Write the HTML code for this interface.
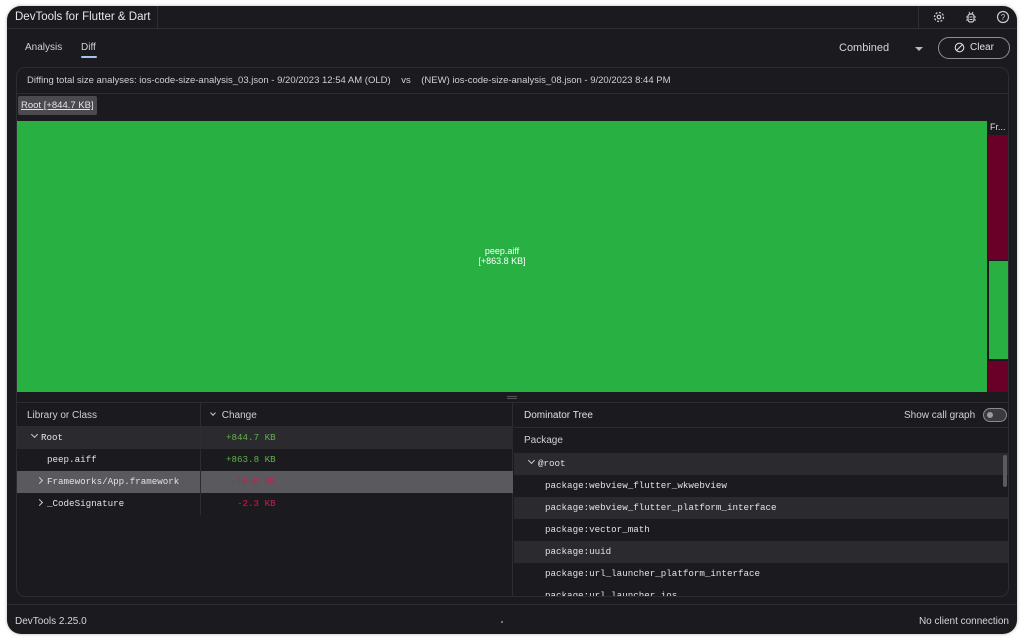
<!DOCTYPE html>
<html><head><style>
*{box-sizing:border-box;margin:0;padding:0}
body{width:1024px;height:640px;background:#fff;font-family:"Liberation Sans",sans-serif;color:#e3e3e6;overflow:hidden;position:relative}
.win{position:absolute;left:7px;top:6px;width:1010px;height:628px;background:#1b1b1f;border-radius:14px;overflow:hidden;box-shadow:0 0 3px rgba(0,0,0,.3)}
.a{position:absolute}
.mono{font-family:"Liberation Mono",monospace;font-size:9.2px}
.row{position:absolute;height:22px;line-height:22px}
.chev{display:inline-block;width:5px;height:5px;border-right:1.2px solid #ccc;border-bottom:1.2px solid #ccc;transform:rotate(45deg);margin:0 4px 3px 1px}
.chr{display:inline-block;width:5px;height:5px;border-right:1.2px solid #ccc;border-bottom:1.2px solid #ccc;transform:rotate(-45deg);margin:0 5px 1px 0}
</style></head><body>
<div class="win">
 <div class="a" style="left:0;top:0;width:1010px;height:23px;border-bottom:1px solid #2e2e33"></div>
 <div class="a" style="left:150px;top:0;width:1px;height:23px;background:#2e2e33"></div>
 <div class="a" style="left:911px;top:0;width:1px;height:23px;background:#2e2e33"></div>
 <div class="a" style="left:8px;top:5px;font-size:11.5px;color:#e6e6ea">DevTools for Flutter &amp; Dart</div>
 <svg class="a" style="left:925px;top:4px" width="14" height="14" viewBox="0 0 14 14"><circle cx="7" cy="7" r="4.5" fill="none" stroke="#ccc" stroke-width="1.3" stroke-dasharray="2 1.5"/><circle cx="7" cy="7" r="1.8" fill="none" stroke="#ccc" stroke-width="1.2"/></svg>
 <svg class="a" style="left:958px;top:4px" width="12" height="14" viewBox="0 0 12 14"><rect x="3" y="4" width="6" height="8" rx="2.5" fill="none" stroke="#ccc" stroke-width="1.3"/><path d="M1 7h2M9 7h2M1 10h2M9 10h2M4 2l1 2M8 2l-1 2M4.5 7h3M4.5 9.5h3" stroke="#ccc" stroke-width="1"/></svg>
 <svg class="a" style="left:989px;top:4px" width="14" height="14" viewBox="0 0 14 14"><circle cx="7" cy="7" r="5.5" fill="none" stroke="#ccc" stroke-width="1.2"/><text x="7" y="10" font-size="8" fill="#ccc" text-anchor="middle" font-family="Liberation Sans">?</text></svg>

 <div class="a" style="left:18px;top:36px;font-size:10px;color:#d0d0d4">Analysis</div>
 <div class="a" style="left:74px;top:36px;font-size:10px;color:#d0d0d4">Diff</div>
 <div class="a" style="left:74px;top:50px;width:16px;height:2px;background:#a7c1f0;border-radius:1px"></div>
 <div class="a" style="left:832px;top:36px;font-size:11px;color:#d6d6da">Combined</div>
 <div class="a" style="left:908px;top:41px;width:0;height:0;border-left:4px solid transparent;border-right:4px solid transparent;border-top:4px solid #bbb"></div>
 <div class="a" style="left:931px;top:31px;width:72px;height:22px;border:1px solid #8e8e94;border-radius:11px"></div>
 <svg class="a" style="left:947px;top:36px" width="11" height="11" viewBox="0 0 11 11"><circle cx="5.5" cy="5.5" r="4.3" fill="none" stroke="#ddd" stroke-width="1.1"/><path d="M2.5 8.5l6-6" stroke="#ddd" stroke-width="1.1"/></svg>
 <div class="a" style="left:963px;top:36px;font-size:10px;color:#e0e0e4">Clear</div>

 <div class="a" style="left:9px;top:61px;width:993px;height:530px;border:1px solid #2c2c31;border-radius:9px;overflow:hidden">
  <div class="a" style="left:0;top:0;width:993px;height:26px;border-bottom:1px solid #2c2c31"></div>
  <div class="a" style="left:10px;top:7px;font-size:9.5px;color:#d0d0d4;white-space:pre">Diffing total size analyses: ios-code-size-analysis_03.json - 9/20/2023 12:54 AM (OLD)    vs    (NEW) ios-code-size-analysis_08.json - 9/20/2023 8:44 PM</div>
  <div class="a" style="left:1px;top:28px;width:79px;height:19px;background:#4a4a4f;border-radius:2px"></div>
  <div class="a" style="left:4px;top:32px;font-size:9.5px;color:#e6e6e6;text-decoration:underline">Root [+844.7 KB]</div>
  <div class="a" style="left:0;top:53px;width:970px;height:271px;background:#28b043"></div>
  <div class="a" style="left:0;top:178px;width:970px;text-align:center;font-size:9px;color:#fff;line-height:10px">peep.aiff<br>[+863.8 KB]</div>
  <div class="a" style="left:971px;top:53px;width:21px;height:14px;background:#1b1b1f;font-size:9px;color:#ddd;padding-left:2px;line-height:13px">Fr...</div>
  <div class="a" style="left:971px;top:67px;width:21px;height:125px;background:#6a0028"></div>
  <div class="a" style="left:971px;top:192px;width:21px;height:100px;background:#28b043;border:1px solid #1b1b1f"></div>
  <div class="a" style="left:971px;top:293px;width:21px;height:31px;background:#6a0028"></div>
  <div class="a" style="left:490px;top:328px;width:10px;height:1px;background:#555"></div><div class="a" style="left:490px;top:330px;width:10px;height:1px;background:#555"></div>
  <div class="a" style="left:0;top:334px;width:993px;height:1px;background:#2c2c31"></div>

  <div class="a" style="left:0;top:335px;width:496px;height:196px;border-right:1px solid #2c2c31">
   <div class="row" style="left:0;top:0;width:496px;height:24px;line-height:24px;border-bottom:1px solid #2c2c31"></div>
   <div class="a" style="left:10px;top:7px;font-size:10px;color:#cfcfd3">Library or Class</div>
   <div class="a" style="left:193px;top:7px;font-size:10px;color:#cfcfd3"><span class="chev" style="width:4px;height:4px"></span> Change</div>
   <div class="row" style="left:0;top:24px;width:496px;background:#2b2b2f"></div>
   <div class="row" style="left:0;top:68px;width:496px;background:#59595e"></div>
   <div class="a" style="left:183px;top:0;width:1px;height:112px;background:#2c2c31"></div>
   <div class="row mono" style="left:14px;top:24px"><span class="chev"></span>Root</div>
   <div class="row mono" style="left:30px;top:46px">peep.aiff</div>
   <div class="row mono" style="left:20px;top:68px"><span class="chr"></span>Frameworks/App.framework</div>
   <div class="row mono" style="left:20px;top:90px"><span class="chr"></span>_CodeSignature</div>
   <div class="row mono" style="left:209px;top:24px;color:#5fb346">+844.7 KB</div>
   <div class="row mono" style="left:209px;top:46px;color:#5fb346">+863.8 KB</div>
   <div class="row mono" style="left:214px;top:68px;color:#d11a4a">-16.8 KB</div>
   <div class="row mono" style="left:220px;top:90px;color:#d11a4a">-2.3 KB</div>
  </div>

  <div class="a" style="left:497px;top:335px;width:496px;height:196px">
   <div class="a" style="left:0;top:0;width:496px;height:25px;border-bottom:1px solid #2c2c31"></div>
   <div class="a" style="left:10px;top:7px;font-size:10px;color:#e0e0e4">Dominator Tree</div>
   <div class="a" style="left:390px;top:7px;font-size:10px;color:#d0d0d4">Show call graph</div>
   <div class="a" style="left:469px;top:5px;width:24px;height:14px;border-radius:7px;background:#3a3a40;border:1px solid #8a8a90"></div>
   <div class="a" style="left:473px;top:9px;width:6px;height:6px;border-radius:3px;background:#9a9aa0"></div>
   <div class="a" style="left:10px;top:32px;font-size:10px;color:#d0d0d4">Package</div>
   <div class="row" style="left:0;top:50px;width:496px;background:#2b2b2f"></div>
   <div class="row" style="left:0;top:94px;width:496px;background:#2b2b2f"></div>
   <div class="row" style="left:0;top:138px;width:496px;background:#2b2b2f"></div>
   <div class="row mono" style="left:14px;top:50px"><span class="chev"></span>@root</div>
   <div class="row mono" style="left:31px;top:72px">package:webview_flutter_wkwebview</div>
   <div class="row mono" style="left:31px;top:94px">package:webview_flutter_platform_interface</div>
   <div class="row mono" style="left:31px;top:116px">package:vector_math</div>
   <div class="row mono" style="left:31px;top:138px">package:uuid</div>
   <div class="row mono" style="left:31px;top:160px">package:url_launcher_platform_interface</div>
   <div class="row mono" style="left:31px;top:182px">package:url_launcher_ios</div>
   <div class="a" style="left:489px;top:52px;width:4px;height:32px;border-radius:2px;background:#5a5a60"></div>
  </div>
 </div>

 <div class="a" style="left:0;top:598px;width:1010px;height:1px;background:#2e2e33"></div>
 <div class="a" style="left:8px;top:610px;font-size:10px;color:#d6d6da">DevTools 2.25.0</div>
 <div class="a" style="left:494px;top:615px;width:2px;height:2px;background:#777"></div>
 <div class="a" style="right:8px;top:610px;font-size:10px;color:#d6d6da">No client connection</div>
</div>
</body></html>
